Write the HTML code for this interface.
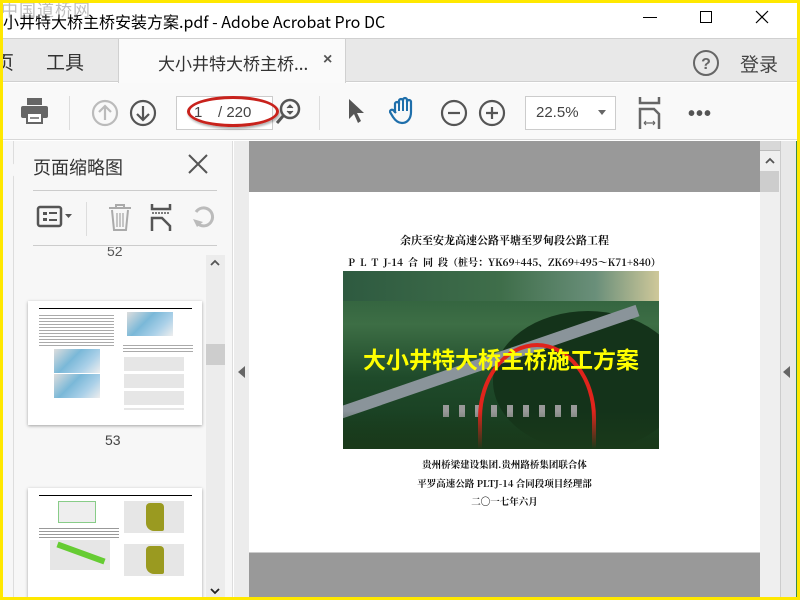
<!DOCTYPE html>
<html><head><meta charset="utf-8">
<style>
*{margin:0;padding:0;box-sizing:border-box}
body{width:800px;height:600px;overflow:hidden;background:#ffe800;font-family:"Liberation Sans","Noto Sans CJK SC",sans-serif;position:relative}
.a{position:absolute}
.cjk{font-family:"Noto Sans CJK SC","WenQuanYi Zen Hei",sans-serif}
.serif{font-family:"Noto Serif CJK SC","Liberation Serif",serif}
</style></head><body>
<div class="a" style="left:3px;top:3px;width:794px;height:594px;background:#fff;overflow:hidden">
 <!-- title bar -->
 <div class="a cjk" style="left:0;top:6px;font-size:16px;color:#000;white-space:nowrap">小井特大桥主桥安装方案.pdf - Adobe Acrobat Pro DC</div>
 <div class="a cjk" style="left:-2px;top:-7px;font-size:17px;color:rgba(110,110,110,.45);letter-spacing:1px" >中国道桥网</div>
 <div class="a" style="left:640px;top:14px;width:14px;height:1px;background:#000"></div>
 <div class="a" style="left:697px;top:8px;width:12px;height:12px;border:1px solid #000"></div>
 <svg class="a" style="left:752px;top:7px" width="14" height="14"><path d="M1 1L13 13M13 1L1 13" stroke="#000" stroke-width="1.2"/></svg>
 <!-- tab bar -->
 <div class="a" style="left:0;top:35px;width:794px;height:44px;background:#e8e8e8;border-top:1px solid #d0d0d0;border-bottom:1px solid #d0d0d0"></div>
 <div class="a" style="left:115px;top:35px;width:228px;height:45px;background:#fafafa;border-left:1px solid #d0d0d0;border-right:1px solid #d0d0d0;border-top:1px solid #d0d0d0"></div>
 <div class="a cjk" style="left:-8px;top:45px;font-size:19px;color:#333">页</div>
 <div class="a cjk" style="left:43px;top:45px;font-size:19px;color:#333">工具</div>
 <div class="a cjk" style="left:155px;top:47px;font-size:17px;color:#333">大小井特大桥主桥...</div>
 <div class="a" style="left:320px;top:48px;font-size:16px;color:#555;font-weight:bold">×</div>
 <svg class="a" style="left:689px;top:46px" width="28" height="28"><circle cx="14" cy="14" r="12" fill="none" stroke="#666" stroke-width="2"/><text x="14" y="20" text-anchor="middle" font-size="16" font-weight="bold" fill="#666" font-family="Liberation Sans">?</text></svg>
 <div class="a cjk" style="left:737px;top:47px;font-size:19px;color:#444">登录</div>
 <!-- toolbar -->
 <div class="a" style="left:0;top:80px;width:794px;height:57px;background:#f9f9f9;border-bottom:1px solid #d8d8d8"></div>
 <svg class="a" style="left:17px;top:94px" width="30" height="28"><rect x="7" y="1" width="15" height="7" fill="#666"/><rect x="1" y="9" width="27" height="12" rx="2" fill="#666"/><rect x="7" y="16" width="15" height="10" fill="#fff" stroke="#666" stroke-width="2"/><line x1="10" y1="21" x2="19" y2="21" stroke="#666" stroke-width="1.5"/></svg>
 <div class="a" style="left:66px;top:93px;width:1px;height:34px;background:#ddd"></div>
 <svg class="a" style="left:88px;top:96px" width="28" height="28"><circle cx="14" cy="14" r="12" fill="none" stroke="#bbb" stroke-width="2.2"/><path d="M14 21V7M8 13l6-6 6 6" fill="none" stroke="#bbb" stroke-width="2.2"/></svg>
 <svg class="a" style="left:126px;top:96px" width="28" height="28"><circle cx="14" cy="14" r="12" fill="none" stroke="#555" stroke-width="2.2"/><path d="M14 7V21M8 15l6 6 6-6" fill="none" stroke="#555" stroke-width="2.2"/></svg>
 <div class="a" style="left:173px;top:93px;width:38px;height:34px;border:1px solid #ccc;background:#fff"></div>
 <div class="a" style="left:210px;top:93px;width:60px;height:34px;border:1px solid #ccc;border-left:none;background:#fff"></div>
 <div class="a" style="left:191px;top:101px;font-size:15px;color:#444">1</div>
 <div class="a" style="left:215px;top:101px;font-size:15px;color:#444">/ 220</div>
 <div class="a" style="left:184px;top:93px;width:92px;height:31px;border:3px solid #c8221c;border-radius:50%;box-shadow:1px 2px 2px rgba(0,0,0,.3)"></div>
 <svg class="a" style="left:271px;top:94px" width="28" height="30"><circle cx="16" cy="12" r="9" fill="none" stroke="#555" stroke-width="2.5"/><path d="M9 19L3 26" stroke="#555" stroke-width="3"/><path d="M13 11l3-3 3 3M13 14l3 3 3-3" fill="#555" stroke="#555"/></svg>
 <div class="a" style="left:316px;top:93px;width:1px;height:34px;background:#ddd"></div>
 <svg class="a" style="left:343px;top:94px" width="20" height="28"><path d="M3 2L3 22L8 17L12 26L15 24L11 16L18 16Z" fill="#555"/></svg>
 <svg class="a" style="left:386px;top:92px" width="30" height="32"><path d="M6 18V9a2 2 0 014 0V6a2 2 0 014 0V5a2 2 0 014 0v2a2 2 0 014 0v10c0 7-4 11-9 11-4 0-7-3-9-6l-3-5a2 2 0 013-2l3 3" fill="none" stroke="#1f6fab" stroke-width="2.2" stroke-linejoin="round"/><path d="M10 9v7M14 6v10M18 6v10M22 8v8" stroke="#1f6fab" stroke-width="2"/></svg>
 <svg class="a" style="left:437px;top:96px" width="28" height="28"><circle cx="14" cy="14" r="12" fill="none" stroke="#555" stroke-width="2.2"/><path d="M8 14h12" stroke="#555" stroke-width="2.2"/></svg>
 <svg class="a" style="left:475px;top:96px" width="28" height="28"><circle cx="14" cy="14" r="12" fill="none" stroke="#555" stroke-width="2.2"/><path d="M8 14h12M14 8v12" stroke="#555" stroke-width="2.2"/></svg>
 <div class="a" style="left:522px;top:93px;width:91px;height:34px;border:1px solid #ccc;background:#fff"></div>
 <div class="a" style="left:533px;top:101px;font-size:15px;color:#444">22.5%</div>
 <div class="a" style="left:595px;top:107px;width:0;height:0;border-left:4px solid transparent;border-right:4px solid transparent;border-top:5px solid #666"></div>
 <svg class="a" style="left:634px;top:94px" width="26" height="32"><path d="M3 0v6h19V0" fill="none" stroke="#666" stroke-width="2.5"/><path d="M3 32V12h14l5 5v15" fill="none" stroke="#666" stroke-width="2.5"/><path d="M7 26h11M7 26l2-2M7 26l2 2M18 26l-2-2M18 26l-2 2" stroke="#666" stroke-width="1.2"/></svg>
 <div class="a" style="left:685px;top:100px;font-size:20px;color:#555;letter-spacing:1px;font-weight:bold">•••</div>

 <!-- sidebar -->
 <div class="a" style="left:0;top:138px;width:230px;height:456px;background:#f7f7f7;border-right:1px solid #ddd"></div>
 <div class="a" style="left:10px;top:138px;width:1px;height:456px;background:#ddd"></div>
 <div class="a" style="left:2px;top:160px;width:10px;height:14px;background:#f7f7f7;clip-path:polygon(100% 0,0 50%,100% 100%)"></div>
 <div class="a cjk" style="left:30px;top:151px;font-size:18px;color:#333">页面缩略图</div>
 <svg class="a" style="left:184px;top:150px" width="22" height="22"><path d="M2 2L20 20M20 2L2 20" stroke="#555" stroke-width="2"/></svg>
 <div class="a" style="left:30px;top:187px;width:184px;height:1px;background:#ccc"></div>
 <svg class="a" style="left:33px;top:202px" width="40" height="24"><rect x="2" y="2" width="23" height="19" rx="2" fill="none" stroke="#555" stroke-width="2.5"/><rect x="7" y="7" width="4" height="3" fill="#555"/><rect x="7" y="13" width="4" height="3" fill="#555"/><rect x="13" y="7" width="8" height="2" fill="#555"/><rect x="13" y="14" width="8" height="2" fill="#555"/><path d="M29 9h7l-3.5 4z" fill="#555"/></svg>
 <div class="a" style="left:83px;top:199px;width:1px;height:34px;background:#ddd"></div>
 <svg class="a" style="left:104px;top:201px" width="26" height="28"><path d="M2 4h22M9 4V1h8v3M5 6l2 20h12l2-20" fill="none" stroke="#aaa" stroke-width="2"/><path d="M10 9v14M13 9v14M16 9v14" stroke="#aaa" stroke-width="1.3"/></svg>
 <svg class="a" style="left:146px;top:201px" width="26" height="28"><path d="M3 0v5h18V0" fill="none" stroke="#555" stroke-width="2.5"/><path d="M3 9h18" stroke="#555" stroke-width="1.5" stroke-dasharray="2 1"/><path d="M3 27V14h10l8 8v5" fill="none" stroke="#555" stroke-width="2.5"/></svg>
 <svg class="a" style="left:187px;top:201px" width="28" height="28"><path d="M8 20A9 9 0 1 0 6 8" fill="none" stroke="#bbb" stroke-width="3"/><path d="M3 15l4 8 6-5z" fill="#bbb"/></svg>
 <div class="a" style="left:30px;top:242px;width:184px;height:1px;background:#ccc"></div>
 <div class="a" style="left:104px;top:244px;font-size:14px;color:#555;height:12px;overflow:hidden;line-height:8px">52</div>
 <!-- sidebar scrollbar -->
 <div class="a" style="left:203px;top:252px;width:19px;height:342px;background:#ececec"></div>
 <div class="a" style="left:203px;top:341px;width:19px;height:21px;background:#cdcdcd"></div>
 <svg class="a" style="left:206px;top:255px" width="12" height="10"><path d="M2 7l4-4 4 4" fill="none" stroke="#555" stroke-width="1.8"/></svg>
 <svg class="a" style="left:206px;top:583px" width="12" height="10"><path d="M2 3l4 4 4-4" fill="none" stroke="#222" stroke-width="1.8"/></svg>
 <!-- thumb 1 -->
 <div class="a" style="left:25px;top:298px;width:174px;height:124px;background:#fff;box-shadow:0 1px 3px rgba(0,0,0,.35)">
  <div class="a" style="left:11px;top:7px;width:153px;height:1px;background:#000"></div>
  <div class="a" style="left:11px;top:12px;width:75px;height:33px;background:repeating-linear-gradient(#fff 0 2px,#aaa 2px 3px)"></div>
  <div class="a" style="left:99px;top:11px;width:46px;height:24px;background:linear-gradient(135deg,#ddd,#7ab8d8 40%,#aad0e8 70%,#eee)"></div>
  <div class="a" style="left:26px;top:48px;width:46px;height:24px;background:linear-gradient(135deg,#ddd,#7ab8d8 40%,#aad0e8 70%,#eee)"></div>
  <div class="a" style="left:26px;top:73px;width:46px;height:24px;background:linear-gradient(135deg,#ddd,#7ab8d8 40%,#aad0e8 70%,#eee)"></div>
  <div class="a" style="left:95px;top:42px;width:70px;height:10px;background:repeating-linear-gradient(#fff 0 2px,#aaa 2px 3px)"></div>
  <div class="a" style="left:96px;top:56px;width:60px;height:53px;background:repeating-linear-gradient(#e6e6e6 0 14px,#fff 14px 17px)"></div>
 </div>
 <div class="a" style="left:102px;top:429px;font-size:14px;color:#444">53</div>
 <!-- thumb 2 -->
 <div class="a" style="left:25px;top:485px;width:174px;height:115px;background:#fff;box-shadow:0 1px 3px rgba(0,0,0,.35)">
  <div class="a" style="left:11px;top:7px;width:153px;height:1px;background:#000"></div>
  <div class="a" style="left:30px;top:13px;width:38px;height:22px;background:#eee;border:1px solid #8c8"></div>
  <div class="a" style="left:96px;top:13px;width:60px;height:32px;background:#e6e6e6"></div>
  <div class="a" style="left:118px;top:15px;width:18px;height:28px;background:#9a9a20;border-radius:4px 4px 2px 8px"></div>
  <div class="a" style="left:11px;top:38px;width:80px;height:12px;background:repeating-linear-gradient(#fff 0 2px,#999 2px 3px)"></div>
  <div class="a" style="left:22px;top:52px;width:60px;height:30px;background:#e6e6e6"></div>
  <div class="a" style="left:28px;top:62px;width:50px;height:6px;background:#6c3;transform:rotate(20deg)"></div>
  <div class="a" style="left:96px;top:56px;width:60px;height:32px;background:#e6e6e6"></div>
  <div class="a" style="left:118px;top:58px;width:18px;height:28px;background:#9a9a20;border-radius:4px 4px 2px 8px"></div>
 </div>

 <!-- left strip between sidebar and doc -->
 <div class="a" style="left:231px;top:138px;width:15px;height:456px;background:#ececec"></div>
 <div class="a" style="left:235px;top:363px;width:0;height:0;border-top:6px solid transparent;border-bottom:6px solid transparent;border-right:7px solid #666"></div>
 <!-- document -->
 <div class="a" style="left:246px;top:138px;width:511px;height:456px;background:#999"></div>
 <div class="a" style="left:246px;top:189px;width:511px;height:361px;background:#fff;border-bottom:1px solid #ccc"></div>
 <div class="a serif" style="left:246px;top:229px;width:511px;text-align:center;font-size:11px;color:#111;font-weight:bold">余庆至安龙高速公路平塘至罗甸段公路工程</div>
 <div class="a serif" style="left:246px;top:251px;width:511px;text-align:center;font-size:10px;color:#111;white-space:nowrap;font-weight:bold">P &nbsp;L &nbsp;T &nbsp;J-14 &nbsp;合 &nbsp;同 &nbsp;段（桩号：YK69+445、ZK69+495～K71+840）</div>
 <div class="a" style="left:340px;top:268px;width:316px;height:178px;overflow:hidden;background:linear-gradient(180deg,#2a5a3a 0%,#3d6e45 30%,#1f4a2a 60%,#163a1e 100%)">
  <div class="a" style="left:0;top:0;width:316px;height:30px;background:linear-gradient(90deg,#2e5a40,#3f6e4a 50%,#6a8f7a 80%,#cfc89a)"></div>
  <div class="a" style="left:150px;top:40px;width:190px;height:140px;border-radius:50%;background:#14331a"></div>
  <div class="a" style="left:-10px;top:0;width:320px;height:12px;background:#8a949a;transform:rotate(-19deg);transform-origin:left top;top:138px"></div>
  <div class="a" style="left:100px;top:134px;width:140px;height:12px;background:repeating-linear-gradient(90deg,#999 0 6px,transparent 6px 16px)"></div>
  <div class="a" style="left:135px;top:72px;width:118px;height:150px;border:4px solid #e0241c;border-radius:50% 50% 0 0;border-bottom:none"></div>
  <div class="a" style="left:0;top:140px;width:316px;height:38px;background:linear-gradient(180deg,transparent,#1a3a1a)"></div>
 </div>
 <div class="a cjk" style="left:340px;top:338px;width:316px;text-align:center;font-size:23px;font-weight:bold;color:#ff0;white-space:nowrap">大小井特大桥主桥施工方案</div>
 <div class="a serif" style="left:246px;top:454px;width:511px;text-align:center;font-size:9.5px;font-weight:bold;color:#111">贵州桥梁建设集团.贵州路桥集团联合体</div>
 <div class="a serif" style="left:246px;top:473px;width:511px;text-align:center;font-size:9.5px;font-weight:bold;color:#111">平罗高速公路 PLTJ-14 合同段项目经理部</div>
 <div class="a serif" style="left:246px;top:491px;width:511px;text-align:center;font-size:9.5px;color:#111;font-weight:bold">二〇一七年六月</div>
 <div class="a" style="left:757px;top:567px;font-size:22px;color:#bbb;font-family:'Liberation Serif',serif">com</div>
 <!-- right scrollbar -->
 <div class="a" style="left:757px;top:138px;width:20px;height:456px;background:#efefef"></div>
 <div class="a" style="left:757px;top:138px;width:20px;height:10px;background:#d8d8d8;border-bottom:1px solid #bbb"></div>
 <div class="a" style="left:757px;top:168px;width:19px;height:21px;background:#cdcdcd"></div>
 <svg class="a" style="left:761px;top:153px" width="12" height="10"><path d="M2 7l4-4 4 4" fill="none" stroke="#555" stroke-width="1.8"/></svg>
 <div class="a" style="left:777px;top:138px;width:1px;height:456px;background:#ccc"></div>
 <div class="a" style="left:778px;top:138px;width:15px;height:456px;background:#e8e8e8"></div>
 <div class="a" style="left:793px;top:138px;width:1px;height:456px;background:#3a8a4a"></div>
 <div class="a" style="left:780px;top:363px;width:0;height:0;border-top:6px solid transparent;border-bottom:6px solid transparent;border-right:7px solid #666"></div>
</div>
</body></html>
